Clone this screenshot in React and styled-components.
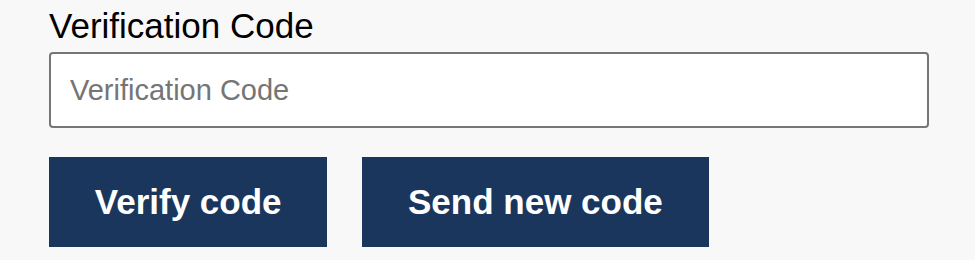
import React from "react";
import styled, { createGlobalStyle } from "styled-components";

const Global = createGlobalStyle`
  html, body { margin: 0; padding: 0; background: #f8f8f8; }
  body { font-family: "Liberation Sans", Arial, sans-serif; }
`;

const Form = styled.div`
  padding: 6px 46px 0 49px;
  display: flex;
  flex-direction: column;
`;

const Label = styled.label`
  font-size: 35px;
  line-height: 39px;
  color: #000;
  margin-bottom: 7px;
`;

const Input = styled.input`
  box-sizing: border-box;
  width: 880px;
  height: 76px;
  border: 2px solid #767676;
  border-radius: 4px;
  background: #fff;
  padding: 0 19px;
  font-family: "Liberation Sans", Arial, sans-serif;
  font-size: 29px;
  color: #000;
  outline: none;
  &::placeholder { color: #757575; }
`;

const Actions = styled.div`
  display: flex;
  gap: 35px;
  margin-top: 29px;
`;

const Button = styled.button`
  height: 90px;
  padding: 0 45.75px;
  border: none;
  border-radius: 0;
  background: #1b365d;
  color: #fff;
  font-family: "Liberation Sans", Arial, sans-serif;
  font-weight: 700;
  font-size: 35px;
  cursor: pointer;
`;

export default function App() {
  return (
    <>
      <Global />
      <Form>
        <Label htmlFor="code">Verification Code</Label>
        <Input id="code" placeholder="Verification Code" />
        <Actions>
          <Button>Verify code</Button>
          <Button>Send new code</Button>
        </Actions>
      </Form>
    </>
  );
}
